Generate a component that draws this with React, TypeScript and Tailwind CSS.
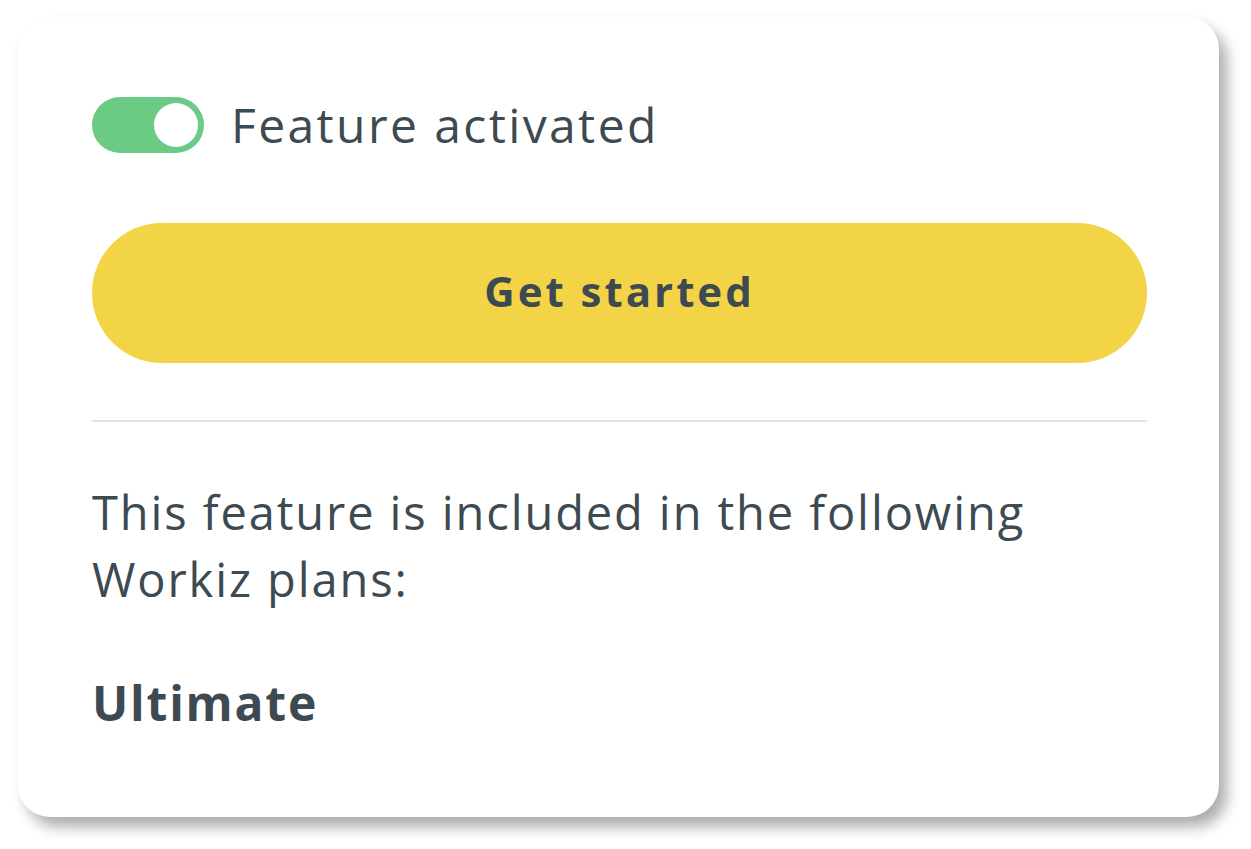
import React from "react";

function Toggle({ on }: { on: boolean }) {
  return (
    <div
      className={`flex items-center w-[112px] h-[56px] rounded-full px-[6px] ${
        on ? "bg-[#6bcb84] justify-end" : "bg-gray-300 justify-start"
      }`}
    >
      <div className="w-[44px] h-[44px] rounded-full bg-white" />
    </div>
  );
}

export default function App() {
  const plans = ["Ultimate"];

  return (
    <div className="w-[1251px] h-[849px] bg-white pt-[17px] pl-[18px] font-['Open_Sans',sans-serif] text-[#3d4a51]">
      <div className="w-[1201px] h-[800px] rounded-[32px] bg-white shadow-[8px_10px_14px_rgba(0,0,0,0.32)] pl-[74px] pr-[72px] pt-[80px]">
        <div className="flex items-center gap-[27px]">
          <Toggle on />
          <span className="text-[48px] leading-none tracking-[2.4px]">
            Feature activated
          </span>
        </div>

        <button className="mt-[70px] w-full h-[140px] pb-[6px] rounded-full bg-[#f3d447] text-[42px] font-bold tracking-[3px] text-[#3d4a51]">
          Get started
        </button>

        <div className="mt-[57px] h-[2px] bg-[#e0e4e6]" />

        <p className="mt-[57px] text-[47px] leading-[67px] tracking-[1.9px]">
          This feature is included in the following
          <br />
          Workiz plans:
        </p>

        <div className="mt-[56px] flex flex-col gap-2">
          {plans.map((p) => (
            <p
              key={p}
              className="text-[48px] font-bold leading-[67px] tracking-[1.8px]"
            >
              {p}
            </p>
          ))}
        </div>
      </div>
    </div>
  );
}
